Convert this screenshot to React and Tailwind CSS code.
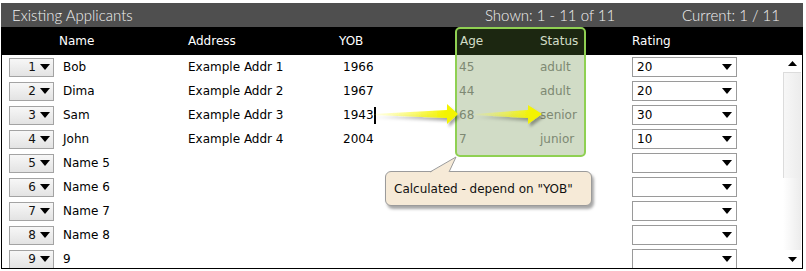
import React from 'react';

// Applicant rows shown in the grid
const ROWS = [
    { n: 1, name: 'Bob', addr: 'Example Addr 1', yob: '1966', age: '45', status: 'adult', rating: '20' },
    { n: 2, name: 'Dima', addr: 'Example Addr 2', yob: '1967', age: '44', status: 'adult', rating: '20' },
    { n: 3, name: 'Sam', addr: 'Example Addr 3', yob: '1943', age: '68', status: 'senior', rating: '30', cursor: true },
    { n: 4, name: 'John', addr: 'Example Addr 4', yob: '2004', age: '7', status: 'junior', rating: '10' },
    { n: 5, name: 'Name 5' },
    { n: 6, name: 'Name 6' },
    { n: 7, name: 'Name 7' },
    { n: 8, name: 'Name 8' },
    { n: 9, name: '9' },
];

function DownArrow() {
    return (
        <svg width="10" height="6" viewBox="0 0 10 6" className="shrink-0">
            <polygon points="0,0 10,0 5,6" fill="#000" />
        </svg>
    );
}

function Spinner({ value }) {
    return (
        <div className="w-[45px] h-[19px] border border-[#a3a3a3] bg-gradient-to-b from-[#f7f7f7] to-[#e3e3e3] flex items-center justify-end pr-[3px] gap-[4px]">
            <span className="text-[#111]">{value}</span>
            <DownArrow />
        </div>
    );
}

function RatingSelect({ value }) {
    return (
        <div className="w-[105px] h-[20px] border border-[#9a9a9a] bg-white flex items-center justify-between pl-[4px] pr-[4px]">
            <span>{value || ''}</span>
            <DownArrow />
        </div>
    );
}

export default function App() {
    return (
        <div className="w-[806px] h-[271px] bg-white relative overflow-hidden font-['DejaVu_Sans',sans-serif] text-[12px] text-black">
            <div className="ml-[1px] mt-[3px] w-[802px]">
                {/* Title bar */}
                <div className="h-[24px] bg-[#4f4f4f] text-[#f2f2f2] flex items-center font-['Lato',sans-serif] font-light text-[15px]">
                    <span className="ml-[11px] w-[473px]">Existing Applicants</span>
                    <span className="w-[197px]">Shown: 1 - 11 of 11</span>
                    <span>Current: 1 / 11</span>
                </div>

                {/* Column headers */}
                <div className="h-[28px] bg-black text-white flex items-center">
                    <span className="ml-[58px] w-[129px]">Name</span>
                    <span className="w-[151px]">Address</span>
                    <span className="w-[121px]">YOB</span>
                    <span className="w-[80px]">Age</span>
                    <span className="w-[92px]">Status</span>
                    <span>Rating</span>
                </div>

                {/* Body */}
                <div className="h-[214px] border-x border-b border-black flex overflow-hidden">
                    <div className="flex-1 flex flex-col">
                        {ROWS.map((r) => (
                            <div key={r.n} className="h-[24px] shrink-0 flex items-center">
                                <div className="ml-[7px] w-[54px]">
                                    <Spinner value={r.n} />
                                </div>
                                <span className="w-[125px]">{r.name}</span>
                                <span className="w-[154px]">{r.addr}</span>
                                <span className="w-[117px] pl-[1px] flex items-center">
                                    {r.yob}
                                    {r.cursor && <span className="inline-block w-[2px] h-[17px] bg-black" />}
                                </span>
                                <span className="w-[81px] text-[#8a8a8a]">{r.age}</span>
                                <span className="w-[92px] text-[#8a8a8a]">{r.status}</span>
                                <RatingSelect value={r.rating} />
                            </div>
                        ))}
                    </div>

                    {/* Scrollbar */}
                    <div className="w-[18px] mr-[1px] flex flex-col">
                        <div className="h-[17px] flex items-center justify-center">
                            <svg width="9" height="5" viewBox="0 0 9 5">
                                <polygon points="0,5 9,5 4.5,0" fill="#000" />
                            </svg>
                        </div>
                        <div className="h-[106px] border-t border-l border-[#dcdcdc] bg-gradient-to-r from-[#f7f7f7] to-[#ececec]" />
                        <div className="flex-1 bg-gradient-to-r from-[#ffffff] to-[#ececec]" />
                        <div className="h-[18px] flex items-center justify-center">
                            <svg width="9" height="5" viewBox="0 0 9 5">
                                <polygon points="0,0 9,0 4.5,5" fill="#000" />
                            </svg>
                        </div>
                    </div>
                </div>
            </div>

            {/* Calculated columns highlight */}
            <div className="absolute left-[455px] top-[27px] w-[131px] h-[130px] rounded-[5px] border-2 border-[#8fd052] bg-[rgba(96,133,60,0.29)] pointer-events-none" />

            {/* Yellow arrows */}
            <svg className="absolute left-[360px] top-[98px] pointer-events-none" width="200" height="34" viewBox="0 0 200 34">
                <defs>
                    <linearGradient id="arrowFade" x1="0" x2="1" y1="0" y2="0">
                        <stop offset="0" stopColor="#ffff40" stopOpacity="0.1" />
                        <stop offset="0.85" stopColor="#f4f400" stopOpacity="1" />
                    </linearGradient>
                    <filter id="arrowShadow" x="-10%" y="-40%" width="130%" height="200%">
                        <feDropShadow dx="2" dy="3" stdDeviation="1.5" floodColor="#000" floodOpacity="0.35" />
                    </filter>
                </defs>
                <polygon
                    points="13,16 87,12 87,6 98,16 87,26 87,20 13,17"
                    fill="url(#arrowFade)"
                    filter="url(#arrowShadow)"
                />
                <polygon
                    points="115,16 168,12 168,7 182,16 168,26 168,20 115,17"
                    fill="url(#arrowFade)"
                    filter="url(#arrowShadow)"
                />
            </svg>

            {/* Tooltip */}
            <div className="absolute left-[385px] top-[171px] w-[207px] h-[35px] rounded-[6px] border border-[#9b9b9b] bg-[#f6ead7] shadow-[2px_3px_3px_rgba(0,0,0,0.35)] flex items-center pl-[8px] text-[#111]">
                Calculated - depend on "YOB"
            </div>
            <svg className="absolute left-[428px] top-[155px] pointer-events-none" width="32" height="18" viewBox="0 0 32 18">
                <polygon points="2,17.5 28,2 21,17.5" fill="#f6ead7" />
                <polyline points="2,17 28,2 21,17" fill="none" stroke="#9b9b9b" strokeWidth="1" />
            </svg>
        </div>
    );
}
